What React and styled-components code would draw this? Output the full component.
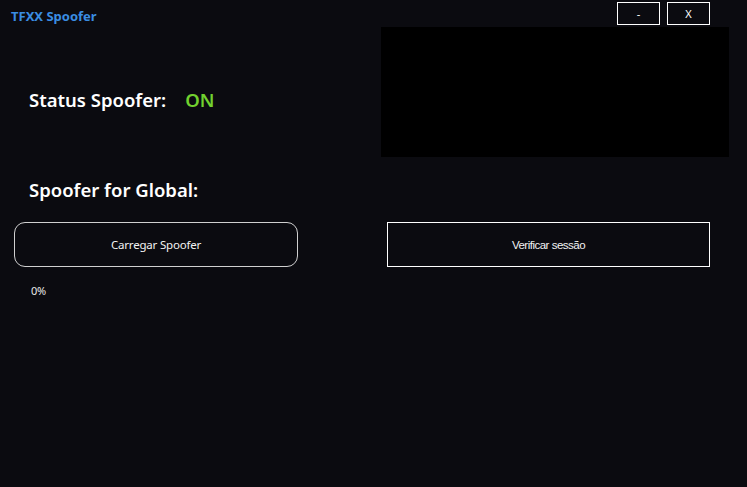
import React, { useState } from 'react';
import styled, { createGlobalStyle } from 'styled-components';

const GlobalStyle = createGlobalStyle`
  html, body {
    margin: 0;
    padding: 0;
    background: #0b0b10;
  }
`;

const Window = styled.div`
  width: 747px;
  height: 487px;
  background: #0b0b10;
  color: #ffffff;
  font-family: 'Noto Sans', 'Open Sans', sans-serif;
  display: flex;
  flex-direction: column;
  overflow: hidden;
`;

const TitleBar = styled.div`
  height: 27px;
  display: flex;
  align-items: flex-start;
  justify-content: space-between;
  padding: 0 37px 0 11px;
  box-sizing: border-box;
`;

const Title = styled.span`
  color: #3a8de2;
  font-weight: 700;
  font-size: 13px;
  line-height: 16px;
  margin-top: 8px;
`;

const WindowButtons = styled.div`
  display: flex;
  gap: 7px;
  margin-top: 2px;
`;

const WindowButton = styled.button`
  width: 43px;
  height: 23px;
  background: transparent;
  border: 1.5px solid #ffffff;
  color: #ffffff;
  font-family: 'Noto Sans', sans-serif;
  font-size: 11px;
  padding: 0;
  cursor: pointer;
`;

const TopSection = styled.div`
  height: 195px;
  display: flex;
`;

const InfoColumn = styled.div`
  width: 381px;
  padding: 61px 0 0 29px;
  box-sizing: border-box;
  display: flex;
  flex-direction: column;
  gap: 66px;
`;

const Heading = styled.div`
  font-size: 18.5px;
  font-weight: 600;
  line-height: 24px;
  display: flex;
  gap: 19px;
`;

const StatusValue = styled.span`
  color: ${(p) => (p.$on ? '#72d12f' : '#e04040')};
`;

const Preview = styled.div`
  width: 348px;
  height: 130px;
  background: #000000;
`;

const ActionRow = styled.div`
  display: flex;
  padding-left: 14px;
  gap: 89px;
`;

const ActionButton = styled.button`
  width: ${(p) => p.$width}px;
  height: 45px;
  background: transparent;
  color: #f2f2f2;
  border: 1px solid ${(p) => (p.$rounded ? '#d0d0d0' : '#ffffff')};
  border-radius: ${(p) => (p.$rounded ? '11px' : '0')};
  font-family: ${(p) =>
    p.$rounded ? "'Noto Sans', 'Open Sans', sans-serif" : "'Liberation Sans', Arial, sans-serif"};
  font-size: 11.5px;
  letter-spacing: ${(p) => (p.$rounded ? '-0.2px' : '-0.5px')};
  cursor: pointer;
`;

const Progress = styled.div`
  padding: 17px 0 0 31px;
  font-size: 11px;
  line-height: 14px;
  color: #e8e8e8;
  letter-spacing: -0.4px;
`;

export default function App() {
  const [progress] = useState(0);

  return (
    <Window>
      <GlobalStyle />
      <TitleBar>
        <Title>TFXX Spoofer</Title>
        <WindowButtons>
          <WindowButton>-</WindowButton>
          <WindowButton>X</WindowButton>
        </WindowButtons>
      </TitleBar>
      <TopSection>
        <InfoColumn>
          <Heading>
            Status Spoofer: <StatusValue $on>ON</StatusValue>
          </Heading>
          <Heading>Spoofer for Global:</Heading>
        </InfoColumn>
        <Preview />
      </TopSection>
      <ActionRow>
        <ActionButton $rounded $width={284}>Carregar Spoofer</ActionButton>
        <ActionButton $width={323}>Verificar sessão</ActionButton>
      </ActionRow>
      <Progress>{progress}%</Progress>
    </Window>
  );
}
